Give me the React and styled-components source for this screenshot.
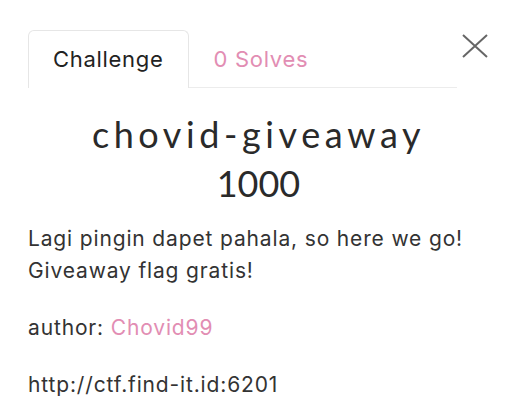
import styled, { createGlobalStyle } from 'styled-components';

const GlobalStyle = createGlobalStyle`
  body {
    margin: 0;
    background: #fff;
    font-family: Inter, "Liberation Sans", sans-serif;
    color: #2b2b2b;
  }
`;

const Modal = styled.div`
  padding: 30px 33px 0 28px;
`;

const Header = styled.div`
  display: flex;
  align-items: flex-start;
`;

const TabList = styled.div`
  flex: 1;
  display: flex;
  border-bottom: 1px solid #ececec;
`;

const Tab = styled.div`
  padding: 16px 24px 17px;
  font-size: 22px;
  line-height: 24px;
  letter-spacing: 0.7px;
  margin-bottom: -1px;
  color: ${(props) => (props.active ? '#222' : '#e28db3')};
  background: ${(props) => (props.active ? '#fff' : 'transparent')};
  border: 1px solid ${(props) => (props.active ? '#e6e6e6' : 'transparent')};
  border-bottom: none;
  border-radius: 6px 6px 0 0;
`;

const CloseButton = styled.button`
  border: none;
  background: none;
  padding: 0;
  margin: 3px 0 0 4px;
  width: 28px;
  height: 26px;
  display: flex;
  align-items: center;
  justify-content: center;
  cursor: pointer;
`;

const Title = styled.h2`
  margin: 21px 0 0;
  text-align: center;
  font-family: Lato, sans-serif;
  font-weight: 400;
  font-size: 36px;
  line-height: 50px;
  letter-spacing: 4.6px;
  color: #2a2a2a;
`;

const Value = styled.h3`
  margin: 4px 0 0;
  text-align: center;
  font-family: Lato, sans-serif;
  font-weight: 400;
  font-size: 36px;
  line-height: 40px;
  color: #2a2a2a;
`;

const Description = styled.div`
  margin-top: 20px;
  font-size: 21px;
  line-height: 32px;
  letter-spacing: 0.85px;
  color: #333;

  p {
    margin: 0 0 25px;
  }
`;

const Link = styled.span`
  color: #e28db3;
`;

export default function App() {
  return (
    <>
      <GlobalStyle />
      <Modal>
        <Header>
          <TabList>
            <Tab active>Challenge</Tab>
            <Tab>0 Solves</Tab>
          </TabList>
          <CloseButton aria-label="Close">
            <svg width="26" height="24" viewBox="0 0 26 24">
              <path d="M1 1 L25 23 M25 1 L1 23" stroke="#666" strokeWidth="2" />
            </svg>
          </CloseButton>
        </Header>
        <Title>chovid-giveaway</Title>
        <Value>1000</Value>
        <Description>
          <p>
            Lagi pingin dapet pahala, so here we go!
            <br />
            Giveaway flag gratis!
          </p>
          <p>
            author: <Link>Chovid99</Link>
          </p>
          <p>http://ctf.find-it.id:6201</p>
        </Description>
      </Modal>
    </>
  );
}
